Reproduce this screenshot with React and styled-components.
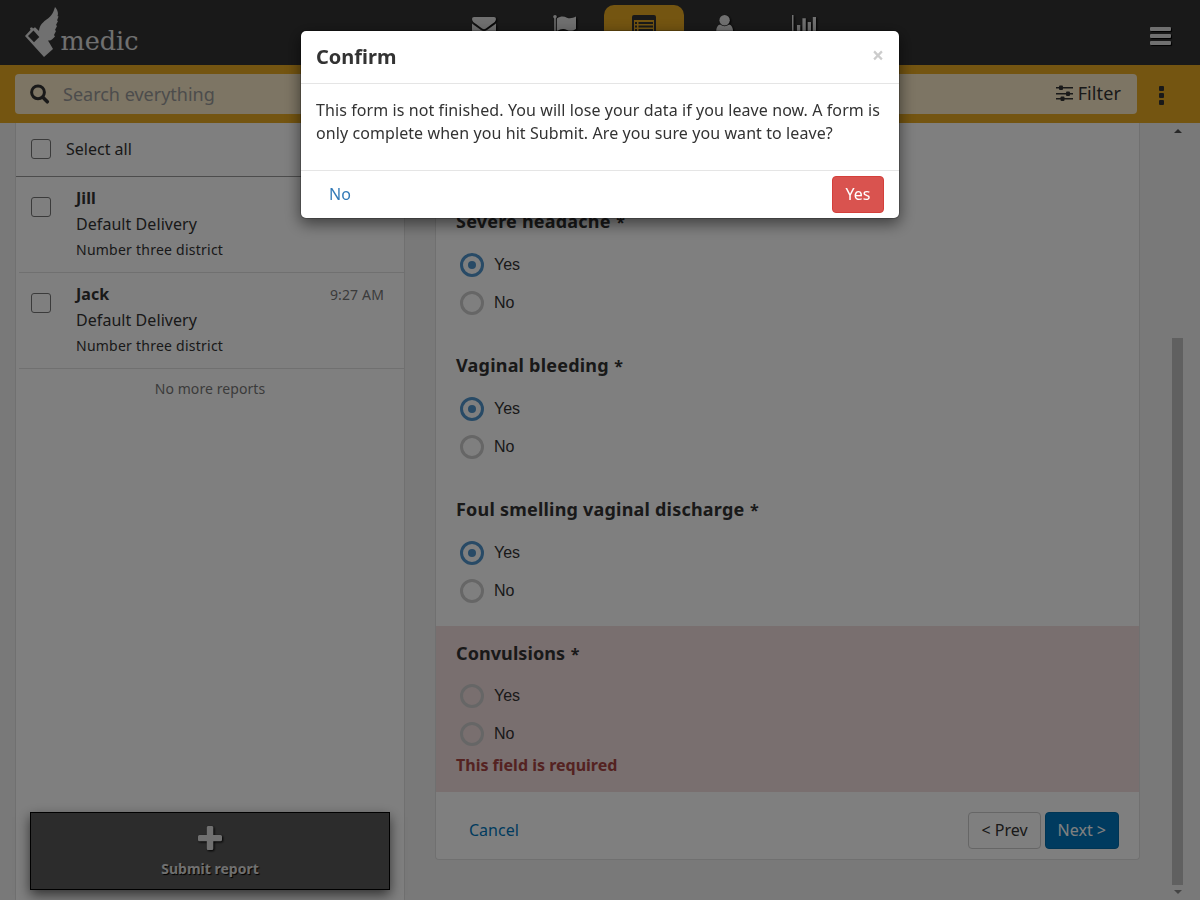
import React from "react";
import styled, { createGlobalStyle } from "styled-components";

const GlobalStyle = createGlobalStyle`
  * { box-sizing: border-box; }
  body {
    margin: 0;
    background: #f2f2f2;
    color: #333;
    font: 16px/23px "Noto Sans", sans-serif;
    overflow: hidden;
  }
`;

const Page = styled.div`
  width: 1200px;
  height: 900px;
  display: flex;
  flex-direction: column;
  overflow: hidden;
`;

const Header = styled.header`
  height: 65px;
  flex: none;
  display: grid;
  grid-template-columns: 444px 400px 1fr;
  background: #333;
  color: #e0e0e0;
`;

const Logo = styled.svg`
  margin: 5px 0 0 23px;
`;

const Tabs = styled.nav`
  display: flex;
  padding-top: 5px;
`;

const Tab = styled.div`
  width: 80px;
  height: 60px;
  padding-top: 7px;
  display: flex;
  justify-content: center;
  border-radius: 10px 10px 0 0;
  background: ${(p) => (p.$active ? "#e9aa22" : "transparent")};
  color: ${(p) => (p.$active ? "#333" : "#e0e0e0")};
  svg { filter: ${(p) => (p.$active ? "none" : "drop-shadow(1px 1px 1px #000)")}; }
`;

const MenuButton = styled.div`
  justify-self: end;
  width: 21px;
  margin: 27px 29px 0 0;
  display: flex;
  flex-direction: column;
  gap: 3px;
`;

const MenuBar = styled.span`
  height: 4px;
  border-radius: 1px;
  background: #e0e0e0;
  box-shadow: 1px 1px 1px #000;
`;

const Toolbar = styled.div`
  height: 58px;
  flex: none;
  display: flex;
  align-items: center;
  padding: 0 36px 0 15px;
  background: #e9aa22;
`;

const SearchBox = styled.div`
  width: 1122px;
  height: 40px;
  display: flex;
  align-items: center;
  padding: 0 16px 0 15px;
  border-radius: 4px;
  background: #faeac8;
`;

const Placeholder = styled.span`
  flex: 1;
  margin-left: 13px;
  font-size: 18px;
  color: #999;
`;

const FilterLabel = styled.span`
  display: flex;
  align-items: center;
  gap: 5px;
  margin-top: -2px;
  font-size: 18px;
  letter-spacing: 0.1px;
`;

const Kebab = styled.div`
  margin: 2px 0 0 22px;
  display: flex;
  flex-direction: column;
  gap: 2px;
`;

const KebabDot = styled.span`
  width: 5px;
  height: 5px;
  border-radius: 1px;
  background: #333;
`;

const Content = styled.main`
  flex: 1;
  min-height: 0;
  display: flex;
  padding-left: 15px;
`;

const Sidebar = styled.aside`
  width: 390px;
  display: flex;
  flex-direction: column;
  background: #fff;
  border: solid #e0e0e0;
  border-width: 0 1px;
`;

const SelectAll = styled.div`
  height: 54px;
  display: flex;
  align-items: center;
  gap: 15px;
  padding: 0 0 1px 15px;
  border-bottom: 1px solid #999;
`;

const Checkbox = styled.span`
  width: 20px;
  height: 20px;
  flex: none;
  border: 1px solid #767676;
  border-radius: 3px;
`;

const Report = styled.div`
  height: 96px;
  margin-left: 3px;
  display: flex;
  gap: 25px;
  padding: 8px 20px 0 12px;
  border-bottom: 1px solid #e0e0e0;
  line-height: 26px;
  ${Checkbox} { margin-top: 12px; }
`;

const ReportText = styled.div`
  flex: 1;
  letter-spacing: 0.06px;
`;

const ReportHead = styled.div`
  height: 26px;
  display: flex;
  justify-content: space-between;
`;

const Time = styled.span`
  font-size: 14px;
  line-height: 28px;
  letter-spacing: 0.15px;
  color: #777;
`;

const District = styled.div`
  font-size: 14px;
  letter-spacing: 0.24px;
`;

const NoMore = styled.div`
  padding-top: 8px;
  text-align: center;
  font-size: 14px;
  letter-spacing: 0.08px;
  color: #777;
`;

const SubmitReport = styled.div`
  height: 78px;
  margin: auto 14px 10px;
  padding-top: 13px;
  display: flex;
  flex-direction: column;
  align-items: center;
  gap: 7px;
  border: 1px solid #000;
  background: #595959;
  box-shadow: 0 5px 12px rgba(0, 0, 0, 0.6);
  color: #e0e0e0;
  font-weight: bold;
  font-size: 14px;
  text-shadow: 1px 1px 1px #000;
  svg { filter: drop-shadow(1px 1px 1px #000); }
`;

const FormPanel = styled.section`
  width: 705px;
  height: 737px;
  margin-left: 30px;
  padding-top: 71px;
  background: #fff;
  border: solid #e0e0e0;
  border-width: 0 1px 1px;
  border-radius: 0 0 4px 4px;
`;

const Question = styled.div`
  height: ${(p) => (p.$invalid ? 166 : 144)}px;
  padding: 15px 20px 0;
  background: ${(p) => (p.$invalid ? "#f2dede" : "transparent")};
`;

const QuestionLabel = styled.div`
  margin-bottom: ${(p) => (p.$invalid ? 13 : 14)}px;
  font-size: 18px;
  font-weight: bold;
  line-height: 25px;
  letter-spacing: ${(p) => (p.$invalid ? 0.08 : 0.21)}px;
`;

const Required = styled.span`
  margin-left: 5.5px;
  font-size: 16px;
`;

const Option = styled.div`
  height: 38px;
  display: flex;
  align-items: flex-start;
  gap: 10px;
  padding: 4px 0 0 4px;
  font-family: "Liberation Sans", sans-serif;
`;

const Radio = styled.span`
  width: 24px;
  height: 24px;
  display: grid;
  place-items: center;
  border: 3px solid ${(p) => (p.$on ? "#5195cc" : "#ccc")};
  border-radius: 50%;
  &::after {
    content: "";
    width: 8px;
    height: 8px;
    border-radius: 50%;
    background: ${(p) => (p.$on ? "#5195cc" : "transparent")};
  }
`;

const ErrorText = styled.div`
  margin-top: -2px;
  color: #a94442;
  font-weight: bold;
`;

const FormFooter = styled.div`
  display: flex;
  gap: 4px;
  padding: 20px;
`;

const buttonKinds = {
  link: ["transparent", "transparent", "#0076bd"],
  plain: ["#fff", "#ccc", "#333"],
  primary: ["#0077be", "#006aa9", "#fff"],
  cancel: ["transparent", "transparent", "#337ab7"],
  danger: ["#d9534f", "#d43f3a", "#fff"],
};

const Button = styled.button`
  height: 37px;
  padding: 0 12px;
  margin: 0 ${(p) => (p.$push ? "auto" : 0)} 0 0;
  border-radius: 4px;
  font: inherit;
  min-width: 52px;
  background: ${(p) => buttonKinds[p.$kind][0]};
  border: 1px solid ${(p) => buttonKinds[p.$kind][1]};
  color: ${(p) => buttonKinds[p.$kind][2]};
  ${(p) => (p.$kind === "cancel" ? "text-align: left;" : "")}
`;

const Scrollbar = styled.div`
  width: 11px;
  margin-left: 32px;
  display: flex;
  flex-direction: column;
  align-items: center;
`;

const Arrow = styled.span`
  border: solid transparent;
  border-width: ${(p) => (p.$up ? "0 4px 4px" : "4px 4px 0")};
  ${(p) => (p.$up ? "border-bottom-color: #505050; margin-top: 6px" : "border-top-color: #8b8b8b; margin-top: 5px")};
`;

const Thumb = styled.span`
  width: 11px;
  height: 547px;
  margin-top: 205px;
  background: #c1c1c1;
`;

const Backdrop = styled.div`
  position: fixed;
  inset: 0;
  padding-top: 30px;
  background: rgba(0, 0, 0, 0.5);
`;

const Dialog = styled.div`
  width: 600px;
  margin: 0 auto;
  background: #fff;
  background-clip: padding-box;
  border: 1px solid rgba(0, 0, 0, 0.2);
  border-radius: 6px;
  box-shadow: 0 5px 15px rgba(0, 0, 0, 0.5);
`;

const DialogHeader = styled.div`
  height: 53px;
  display: flex;
  justify-content: space-between;
  padding: 12px 15px 0;
  border-bottom: 1px solid #e5e5e5;
`;

const Title = styled.h2`
  margin: 0;
  font-size: 20px;
  line-height: 28px;
`;

const Close = styled.span`
  font-size: 21px;
  font-weight: bold;
  line-height: 24px;
  color: #ccc;
`;

const DialogBody = styled.div`
  height: 86px;
  padding: 15px 0 15px 15px;
  letter-spacing: 0.085px;
`;

const DialogFooter = styled.div`
  display: flex;
  justify-content: space-between;
  padding: 5px 15px;
  border-top: 1px solid #e5e5e5;
`;

const EnvelopeIcon = () => (
  <svg width="24" height="24" viewBox="0 0 24 24" fill="currentColor">
    <path d="M2 5H22Q24 5 24 7C24 9 22 11 20 12L14 16.5Q12 17.8 10 16.5L4 12C2 11 0 9 0 7Q0 5 2 5Z" />
    <path d="M0 11.5Q1 12.5 3 13.8L9 18Q12 20 15 18L21 13.8Q23 12.5 24 11.5V21Q24 23 22 23H2Q0 23 0 21Z" />
  </svg>
);

const FlagIcon = () => (
  <svg width="24" height="24" viewBox="-1 0 24 24" fill="currentColor">
    <circle cx="2" cy="4.7" r="1.8" />
    <path d="M1.2 5H2.8V24H1.2Z" />
    <path d="M3.8 6.5C8 3.8 11 4 14 5.8C17 7 20 6 23 4.6V17C20 19 17 19.5 14 18C11 16.3 8 16.5 3.8 19Z" />
  </svg>
);

const ListIcon = () => (
  <svg width="24" height="24" viewBox="0 0 24 24">
    <path fill="currentColor" fillRule="evenodd" d="M2 3H22Q24 3 24 5V22Q24 24 22 24H2Q0 24 0 22V5Q0 3 2 3ZM2 8V22H22V8Z" />
    <path stroke="currentColor" strokeWidth="2" d="M3 11H5M6.5 11H21M3 14.5H5M6.5 14.5H21M3 18H5M6.5 18H21" />
  </svg>
);

const PersonIcon = () => (
  <svg width="24" height="24" viewBox="-0.6 0 24 24" fill="currentColor">
    <circle cx="12" cy="8.2" r="5.2" />
    <path d="M7.5 12.5Q12 16 16.5 12.5Q20.5 13.5 20.5 20Q20.5 24 17 24H7Q3.5 24 3.5 20Q3.5 13.5 7.5 12.5Z" />
  </svg>
);

const ChartIcon = () => (
  <svg width="26" height="24" viewBox="0 0 26 24" fill="currentColor">
    <path d="M1 3H2.5V22H25V24H1ZM6 13H9.3V20H6ZM11.4 6.2H14.8V20H11.4ZM16.7 10H20V20H16.7ZM21.8 5H25V20H21.8Z" />
  </svg>
);

const Brand = () => (
  <Logo width="120" height="55" viewBox="0 0 120 55" fill="#e0e0e0">
    <path d="M32 2C35 5 35.5 9 34.5 11L35.5 11.5L34 15.5L35 16L33 20L34 21L32 25L33 26L31 30L32 31.5L29.5 34Q27.5 36 25 35.5L30 44L21 52L2 31L7.5 25L7 23L9 22.2L10 23.5L12 22.3L16 26C16.5 20 20 17 25 13.5C30 9.5 31 5 32 2Z" />
    <path d="M5 31L10.5 25.5L16.3 32L11 37.3Z" fill="#333" />
    <text x="37.5" y="45" fontFamily="DejaVu Serif, serif" fontSize="25.5" textLength="78" lengthAdjust="spacingAndGlyphs">medic</text>
  </Logo>
);

const SearchIcon = () => (
  <svg width="20" height="20" viewBox="0 0 20 20" fill="none" stroke="#333">
    <circle cx="8" cy="8.3" r="6.4" strokeWidth="3" />
    <path d="M12.8 13.2L17.3 17.8" strokeWidth="3.5" strokeLinecap="round" />
  </svg>
);

const SlidersIcon = () => (
  <svg width="17" height="16" viewBox="0 0 17 16" fill="#333">
    <path d="M0 2H17V3.5H0ZM0 8H17V9.5H0ZM0 13H17V14.5H0Z" />
    <rect x="3" y="0.5" width="4" height="4.5" rx="1" />
    <rect x="10" y="6.5" width="4" height="4.5" rx="1" />
    <rect x="4.5" y="11.5" width="4" height="4.5" rx="1" />
  </svg>
);

const PlusIcon = () => (
  <svg width="24" height="24" viewBox="0 0 24 24" fill="currentColor">
    <path d="M10 0H14Q15.3 0 15.3 1.5V9H22.5Q24 9 24 10.5V13.7Q24 15.2 22.5 15.2H15.3V22.5Q15.3 24 14 24H10Q8.8 24 8.8 22.5V15.2H1.5Q0 15.2 0 13.7V10.5Q0 9 1.5 9H8.8V1.5Q8.8 0 10 0Z" />
  </svg>
);

const reports = [
  { name: "Jill" },
  { name: "Jack", time: "9:27 AM" },
];

const questions = [
  { label: "Severe headache", answer: "Yes" },
  { label: "Vaginal bleeding", answer: "Yes" },
  { label: "Foul smelling vaginal discharge", answer: "Yes" },
  { label: "Convulsions", invalid: true },
];

export default function App() {
  return (
    <>
      <GlobalStyle />
      <Page>
        <Header>
          <Brand />
          <Tabs>
            <Tab><EnvelopeIcon /></Tab>
            <Tab><FlagIcon /></Tab>
            <Tab $active><ListIcon /></Tab>
            <Tab><PersonIcon /></Tab>
            <Tab><ChartIcon /></Tab>
          </Tabs>
          <MenuButton><MenuBar /><MenuBar /><MenuBar /></MenuButton>
        </Header>
        <Toolbar>
          <SearchBox>
            <SearchIcon />
            <Placeholder>Search everything</Placeholder>
            <FilterLabel><SlidersIcon />Filter</FilterLabel>
          </SearchBox>
          <Kebab><KebabDot /><KebabDot /><KebabDot /></Kebab>
        </Toolbar>
        <Content>
          <Sidebar>
            <SelectAll><Checkbox />Select all</SelectAll>
            {reports.map((r) => (
              <Report key={r.name}>
                <Checkbox />
                <ReportText>
                  <ReportHead><b>{r.name}</b>{r.time && <Time>{r.time}</Time>}</ReportHead>
                  <div>Default Delivery</div>
                  <District>Number three district</District>
                </ReportText>
              </Report>
            ))}
            <NoMore>No more reports</NoMore>
            <SubmitReport><PlusIcon />Submit report</SubmitReport>
          </Sidebar>
          <FormPanel>
            {questions.map((q) => (
              <Question key={q.label} $invalid={q.invalid}>
                <QuestionLabel $invalid={q.invalid}>{q.label}<Required>*</Required></QuestionLabel>
                {["Yes", "No"].map((o) => (
                  <Option key={o}><Radio $on={q.answer === o} />{o}</Option>
                ))}
                {q.invalid && <ErrorText>This field is required</ErrorText>}
              </Question>
            ))}
            <FormFooter>
              <Button $kind="link" $push>Cancel</Button>
              <Button $kind="plain">&lt; Prev</Button>
              <Button $kind="primary">Next &gt;</Button>
            </FormFooter>
          </FormPanel>
          <Scrollbar><Arrow $up /><Thumb /><Arrow /></Scrollbar>
        </Content>
      </Page>
      <Backdrop>
        <Dialog>
          <DialogHeader><Title>Confirm</Title><Close>×</Close></DialogHeader>
          <DialogBody>
            This form is not finished. You will lose your data if you leave now. A form is only complete when you hit Submit. Are you sure you want to leave?
          </DialogBody>
          <DialogFooter>
            <Button $kind="cancel">No</Button>
            <Button $kind="danger">Yes</Button>
          </DialogFooter>
        </Dialog>
      </Backdrop>
    </>
  );
}
